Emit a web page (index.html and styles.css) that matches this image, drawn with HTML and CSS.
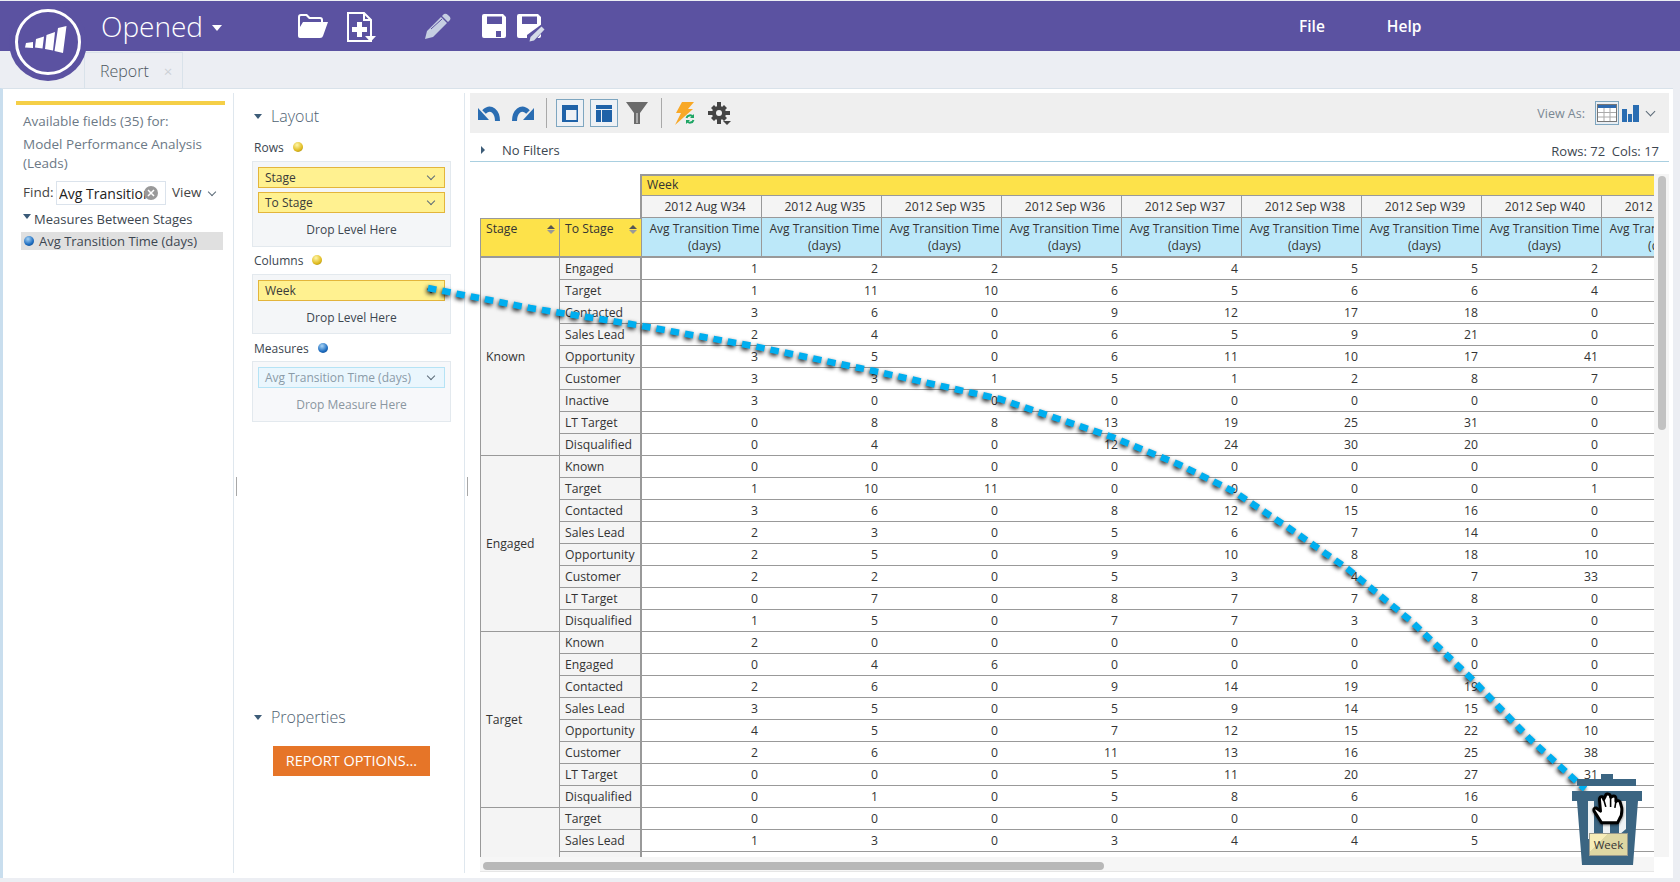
FILE: index.html
```html
<!DOCTYPE html>
<html lang="en">
<head>
<meta charset="utf-8">
<title>Opened - Report</title>
<link rel="stylesheet" href="styles.css">
</head>
<body>
<div class="app">
  <header class="topbar">
    <div class="title">Opened<span class="title-caret"></span></div>
    <div class="top-icons">
      <svg class="ic-folder" width="30" height="24" viewBox="0 0 30 24"><path fill="#fff" d="M0 3Q0 0 3 0H9L12 3H22Q25 3 25 6V8H23V6Q23 5 22 5H11L8 2H3Q2 2 2 3V13L5 8H30L25 22Q24.500 24 22 24H2Q0 24 0 22Z"/></svg>
      <svg class="ic-doc" width="29" height="30" viewBox="0 0 29 30"><path fill="none" stroke="#fff" stroke-width="2" d="M1 1H17L24 8V29H1Z"/><path fill="#fff" d="M16 1H18V7H24V9H16ZM10 10H15V15H20V20H15V25H10V20H5V15H10Z"/><path fill="#fff" d="M18 24H29L23.500 30Z"/></svg>
      <svg class="ic-pencil" width="26" height="26" viewBox="0 0 26 26"><path fill="#c6cfe2" d="M19 1Q21 0 23 2L25 4Q26 6 25 7L23 9L17 3ZM16 4L22 10L8 24L0 26L2 18Z"/><path stroke="#5b52a1" stroke-width="1" d="M6 16L17 6"/></svg>
      <svg class="ic-save" width="24" height="24" viewBox="0 0 24 24"><path fill="#fff" fill-rule="evenodd" d="M2 0H21L24 3V22Q24 24 22 24H2Q0 24 0 22V2Q0 0 2 0ZM5 2.500V10H20V2.500ZM14 17V23H19V17Z"/></svg>
      <svg class="ic-saveas" width="29" height="28" viewBox="0 0 29 28"><path fill="#fff" fill-rule="evenodd" d="M2 0H21L24 3V22Q24 24 22 24H2Q0 24 0 22V2Q0 0 2 0ZM5 2.500V10H20V2.500Z"/><path fill="#5b52a1" d="M25 10L29 14L17 28H10V21Z"/><path fill="#d5dbe8" d="M24.500 12.500L27.500 15.500L17 26.500L12.500 27.500L13.500 23Z"/></svg>
    </div>
    <nav class="top-menu"><span class="menu-file">File</span><span class="menu-help">Help</span></nav>
  </header>

  <div class="tabbar"><div class="tab"><span>Report</span><i class="tab-x">×</i></div></div>

  <main class="content">
    <section class="fields">
      <div class="accent"></div>
      <p class="avail">Available fields (35) for:</p>
      <p class="model">Model Performance Analysis<br>(Leads)</p>
      <div class="find">
        <label>Find:</label>
        <div class="find-input"><span class="find-text">Avg Transition</span><svg class="clear" width="14" height="14" viewBox="0 0 14 14"><circle cx="7" cy="7" r="7" fill="#999"/><path stroke="#fff" stroke-width="1.500" d="M4 4L10 10M10 4L4 10"/></svg></div>
        <span class="view">View</span><span class="chev"></span>
      </div>
      <div class="tree-head"><span class="tri-down"></span>Measures Between Stages</div>
      <div class="tree-item"><span class="ball blue"></span>Avg Transition Time (days)</div>
      <div class="split-handle"></div>
    </section>

    <section class="layout">
      <h2 class="sec-title"><span class="tri-small"></span>Layout</h2>
      <div class="lbl lbl-rows">Rows<span class="ball gold"></span></div>
      <div class="well">
        <div class="pill">Stage<span class="chev"></span></div>
        <div class="pill">To Stage<span class="chev"></span></div>
        <div class="drop">Drop Level Here</div>
      </div>
      <div class="lbl lbl-cols">Columns<span class="ball gold"></span></div>
      <div class="well well-col">
        <div class="pill">Week<span class="chev"></span></div>
        <div class="drop">Drop Level Here</div>
      </div>
      <div class="lbl lbl-meas">Measures<span class="ball blue"></span></div>
      <div class="well well-m">
        <div class="pill pill-m">Avg Transition Time (days)<span class="chev"></span></div>
        <div class="drop drop-m">Drop Measure Here</div>
      </div>
      <h2 class="sec-title props"><span class="tri-small"></span>Properties</h2>
      <button class="report-btn">REPORT OPTIONS...</button>
      <div class="split-handle"></div>
    </section>

    <section class="report">
      <div class="toolbar">
        <svg class="t-undo" width="22" height="16" viewBox="0 0 22 16"><path fill="none" stroke="#2a6db2" stroke-width="5" d="M19.500 16C19.500 7 13 0 6 7"/><path fill="#2a6db2" d="M0 3V15H11Z"/></svg>
        <svg class="t-redo" width="22" height="16" viewBox="0 0 22 16"><path fill="none" stroke="#2a6db2" stroke-width="5" d="M2.500 16C2.500 7 9 0 16 7"/><path fill="#2a6db2" d="M22 3V15H11Z"/></svg>
        <span class="t-sep"></span>
        <span class="t-btn"><svg width="16" height="17" viewBox="0 0 16 17"><path fill="#1f62a8" d="M0 0H16V17H0ZM4 5V15H14.500V5Z"/></svg></span>
        <span class="t-btn"><svg width="16" height="17" viewBox="0 0 16 17"><path fill="#1f62a8" d="M0 0H16V4H0ZM0 5H5V17H0ZM6 5H16V17H6Z"/></svg></span>
        <svg class="t-filter" width="22" height="22" viewBox="0 0 22 22"><path fill="#6b6b6b" d="M0 0H22L14 11V22H8V11Z"/><path fill="#aaa" d="M10 11H12V21H10Z"/></svg>
        <span class="t-sep t-sep2"></span>
        <svg class="t-bolt" width="22" height="23" viewBox="0 0 22 23"><path fill="#f8a826" d="M8 0H20L14 7H19L1 23L7 11H2Z"/><circle cx="16" cy="17" r="5" fill="#efefef"/><path fill="none" stroke="#1da564" stroke-width="2" d="M12.500 16A3.600 3.600 0 0 1 19 15M19.500 18A3.600 3.600 0 0 1 13 19"/><path fill="#1da564" d="M20 12V16H16ZM12 22V18H16Z"/></svg>
        <svg class="t-gear" width="23" height="23" viewBox="0 0 23 23"><g fill="#444"><circle cx="11" cy="11" r="7"/><path d="M9 0H13V5H9ZM9 17H13V22H9ZM0 9H5V13H0ZM17 9H22V13H17Z"/><path d="M3 6L6 3L9 6L6 9ZM13 6L16 3L19 6L16 9ZM3 16L6 13L9 16L6 19ZM13 16L16 13L19 16L16 19Z"/></g><circle cx="11" cy="11" r="3" fill="#efefef"/><path fill="#444" d="M15 19H23L19 23Z"/></svg>
        <span class="view-as">View As:</span>
        <span class="va-btn"><svg width="20" height="18" viewBox="0 0 20 18"><rect x=".5" y=".5" width="19" height="17" fill="#fff" stroke="#777"/><rect x="1" y="1" width="18" height="3" fill="#2f6bb0"/><path stroke="#aaa" fill="none" d="M7 4V17M13 4V17M1 8.500H19M1 13H19"/></svg></span>
        <svg class="va-bars" width="17" height="17" viewBox="0 0 17 17"><path fill="#2a6db2" d="M0 4H5V17H0ZM6 9H10V17H6ZM11 0H17V17H11Z"/></svg>
        <span class="chev chev-va"></span>
      </div>

      <div class="filterbar">
        <span class="tri-right"></span><span class="nofilters">No Filters</span>
        <span class="counts">Rows: 72&nbsp; Cols: 17</span>
      </div>

      <div class="grid-area">
        <div class="grid-view">
          <table class="pivot">
            <colgroup><col class="c1"><col class="c2"><col class="c3"><col class="c3"><col class="c3"><col class="c3"><col class="c3"><col class="c3"><col class="c3"><col class="c3"><col class="c3"></colgroup>
            <thead>
              <tr class="r-week"><th class="blank" colspan="2" rowspan="2"></th><th class="yellow week" colspan="9">Week</th></tr>
              <tr class="r-date"><th class="date first">2012 Aug W34</th><th class="date">2012 Aug W35</th><th class="date">2012 Sep W35</th><th class="date">2012 Sep W36</th><th class="date">2012 Sep W37</th><th class="date">2012 Sep W38</th><th class="date">2012 Sep W39</th><th class="date">2012 Sep W40</th><th class="date">2012 Sep W41</th></tr>
              <tr class="r-head">
                <th class="yellow dim">Stage<span class="sort"></span></th>
                <th class="yellow dim">To Stage<span class="sort"></span></th>
                <th class="meas first">Avg Transition Time (days)</th><th class="meas">Avg Transition Time (days)</th><th class="meas">Avg Transition Time (days)</th><th class="meas">Avg Transition Time (days)</th><th class="meas">Avg Transition Time (days)</th><th class="meas">Avg Transition Time (days)</th><th class="meas">Avg Transition Time (days)</th><th class="meas">Avg Transition Time (days)</th><th class="meas">Avg Transition Time (days)</th>
              </tr>
            </thead>
            <tbody>
              <tr><th class="group" rowspan="9">Known</th><th class="sub">Engaged</th><td class="first">1</td><td>2</td><td>2</td><td>5</td><td>4</td><td>5</td><td>5</td><td>2</td><td></td></tr>
              <tr><th class="sub">Target</th><td class="first">1</td><td>11</td><td>10</td><td>6</td><td>5</td><td>6</td><td>6</td><td>4</td><td></td></tr>
              <tr><th class="sub">Contacted</th><td class="first">3</td><td>6</td><td>0</td><td>9</td><td>12</td><td>17</td><td>18</td><td>0</td><td></td></tr>
              <tr><th class="sub">Sales Lead</th><td class="first">2</td><td>4</td><td>0</td><td>6</td><td>5</td><td>9</td><td>21</td><td>0</td><td></td></tr>
              <tr><th class="sub">Opportunity</th><td class="first">3</td><td>5</td><td>0</td><td>6</td><td>11</td><td>10</td><td>17</td><td>41</td><td></td></tr>
              <tr><th class="sub">Customer</th><td class="first">3</td><td>3</td><td>1</td><td>5</td><td>1</td><td>2</td><td>8</td><td>7</td><td></td></tr>
              <tr><th class="sub">Inactive</th><td class="first">3</td><td>0</td><td>0</td><td>0</td><td>0</td><td>0</td><td>0</td><td>0</td><td></td></tr>
              <tr><th class="sub">LT Target</th><td class="first">0</td><td>8</td><td>8</td><td>13</td><td>19</td><td>25</td><td>31</td><td>0</td><td></td></tr>
              <tr><th class="sub">Disqualified</th><td class="first">0</td><td>4</td><td>0</td><td>12</td><td>24</td><td>30</td><td>20</td><td>0</td><td></td></tr>
              <tr><th class="group" rowspan="8">Engaged</th><th class="sub">Known</th><td class="first">0</td><td>0</td><td>0</td><td>0</td><td>0</td><td>0</td><td>0</td><td>0</td><td></td></tr>
              <tr><th class="sub">Target</th><td class="first">1</td><td>10</td><td>11</td><td>0</td><td>0</td><td>0</td><td>0</td><td>1</td><td></td></tr>
              <tr><th class="sub">Contacted</th><td class="first">3</td><td>6</td><td>0</td><td>8</td><td>12</td><td>15</td><td>16</td><td>0</td><td></td></tr>
              <tr><th class="sub">Sales Lead</th><td class="first">2</td><td>3</td><td>0</td><td>5</td><td>6</td><td>7</td><td>14</td><td>0</td><td></td></tr>
              <tr><th class="sub">Opportunity</th><td class="first">2</td><td>5</td><td>0</td><td>9</td><td>10</td><td>8</td><td>18</td><td>10</td><td></td></tr>
              <tr><th class="sub">Customer</th><td class="first">2</td><td>2</td><td>0</td><td>5</td><td>3</td><td>4</td><td>7</td><td>33</td><td></td></tr>
              <tr><th class="sub">LT Target</th><td class="first">0</td><td>7</td><td>0</td><td>8</td><td>7</td><td>7</td><td>8</td><td>0</td><td></td></tr>
              <tr><th class="sub">Disqualified</th><td class="first">1</td><td>5</td><td>0</td><td>7</td><td>7</td><td>3</td><td>3</td><td>0</td><td></td></tr>
              <tr><th class="group" rowspan="8">Target</th><th class="sub">Known</th><td class="first">2</td><td>0</td><td>0</td><td>0</td><td>0</td><td>0</td><td>0</td><td>0</td><td></td></tr>
              <tr><th class="sub">Engaged</th><td class="first">0</td><td>4</td><td>6</td><td>0</td><td>0</td><td>0</td><td>0</td><td>0</td><td></td></tr>
              <tr><th class="sub">Contacted</th><td class="first">2</td><td>6</td><td>0</td><td>9</td><td>14</td><td>19</td><td>19</td><td>0</td><td></td></tr>
              <tr><th class="sub">Sales Lead</th><td class="first">3</td><td>5</td><td>0</td><td>5</td><td>9</td><td>14</td><td>15</td><td>0</td><td></td></tr>
              <tr><th class="sub">Opportunity</th><td class="first">4</td><td>5</td><td>0</td><td>7</td><td>12</td><td>15</td><td>22</td><td>10</td><td></td></tr>
              <tr><th class="sub">Customer</th><td class="first">2</td><td>6</td><td>0</td><td>11</td><td>13</td><td>16</td><td>25</td><td>38</td><td></td></tr>
              <tr><th class="sub">LT Target</th><td class="first">0</td><td>0</td><td>0</td><td>5</td><td>11</td><td>20</td><td>27</td><td>31</td><td></td></tr>
              <tr><th class="sub">Disqualified</th><td class="first">0</td><td>1</td><td>0</td><td>5</td><td>8</td><td>6</td><td>16</td><td>0</td><td></td></tr>
              <tr><th class="group" rowspan="3"></th><th class="sub">Target</th><td class="first">0</td><td>0</td><td>0</td><td>0</td><td>0</td><td>0</td><td>0</td><td>0</td><td></td></tr>
              <tr><th class="sub">Sales Lead</th><td class="first">1</td><td>3</td><td>0</td><td>3</td><td>4</td><td>4</td><td>5</td><td>0</td><td></td></tr>
              <tr><th class="sub">Contacted</th><td class="first">3</td><td>4</td><td>0</td><td>7</td><td>9</td><td>11</td><td>11</td><td>0</td><td></td></tr>
            </tbody>
          </table>
        </div>
        <div class="vscroll"><div class="vthumb"></div></div>
      </div>
      <div class="hscroll"><div class="hthumb"></div></div>
    </section>
  </main>

  <svg class="logo" width="78" height="78" viewBox="0 0 78 78">
    <circle cx="39" cy="39" r="39" fill="#5b52a1"/>
    <circle cx="39" cy="39" r="31.500" fill="none" stroke="#fff" stroke-width="3"/>
    <path fill="#fff" d="M17 40L24 39L24 45L16 44.500ZM27 36L35 33.500L33.500 45.500L26 44.500ZM37.500 32L46 29L44 47.500L36 46ZM49 25L57.500 23L54 50L45.500 48Z"/>
  </svg>

  <svg class="drag-line" width="1680" height="882" viewBox="0 0 1680 882">
    <polyline class="drag-dash" points="428,287 530,307 637,324 753,345 874,370 1000,398 1115,437 1178,463 1233,490 1289,527 1348,568 1411,620 1472,678 1530,738 1585,788"/>
  </svg>

  <div class="trash">
    <svg width="85" height="100" viewBox="0 0 85 100">
      <path fill="#3b6582" d="M36 5H48V10H71V17H12V10H36ZM7 22H77V32H73L68 96H17L12 32H7Z"/>
      <path fill="#eef2f4" d="M23 32H29V70H23ZM38 55H45V66H38ZM54 32H61V60L54 66Z"/>
    </svg>
    <svg class="hand" width="34" height="34" viewBox="0 0 32 32">
      <path fill="#fff" stroke="#000" stroke-width="2.800" stroke-linejoin="round" d="M9 29L2 18Q1 15 4 15L8 18L7 7Q7 4 9.500 4.500Q11 5 11 7L12.500 4Q13 1.500 15.500 2Q17.500 2.500 17.500 5L19.500 4Q22 3 22.500 6V9Q25 7 26.500 9.500L28 15Q28.500 22 26 25L24 29Z"/>
      <path stroke="#000" stroke-width="1.500" d="M11 7L13 14M17.500 5L17.500 14M22.500 9L21.500 15"/>
    </svg>
    <div class="trash-tag">Week</div>
  </div>
</div>
</body>
</html>
```
FILE: styles.css
```css
* { box-sizing: border-box; }
html, body { margin: 0; padding: 0; height: 100%; overflow: hidden; }
body { background: #eceef3; color: #3c3c3c; font-family: "Open Sans", "Liberation Sans", sans-serif; font-size: 12px; }
.app { position: relative; width: 1680px; height: 882px; }

.topbar { display: flex; align-items: center; margin-top: 1px; height: 50px; background: #5b52a1; color: #fff; position: relative; }
.title { margin-left: 101px; font-size: 28px; font-weight: 300; line-height: 50px; display: flex; align-items: center; width: 197px; }
.title-caret { margin-left: 9px; margin-top: 3px; border: 5.5px solid transparent; border-top: 6px solid #fff; border-bottom: 0; }
.top-icons { display: flex; align-items: center; height: 50px; }
.ic-folder { margin-right: 19px; }
.ic-doc { margin-right: 49px; margin-top: 2px; }
.ic-pencil { margin-right: 31px; }
.ic-save { margin-right: 11px; }
.ic-saveas { margin-top: 4px; }
.top-menu { display: flex; font-size: 15.5px; font-weight: 600; position: absolute; left: 1299px; top: 0; line-height: 50px; margin-top: 0; }
.menu-file { margin-right: 62px; }

.tabbar { height: 37px; background: #eceef3; padding-left: 84px; padding-top: 1px; }
.tab { width: 99px; height: 36px; border: 1px solid #d9e2ea; border-bottom: 0; display: flex; align-items: center; padding-left: 15px; font-size: 16px; font-weight: 300; color: #4d5660; }
.tab-x { font-style: normal; color: #ccd1d6; margin-left: 15px; font-size: 15px; font-weight: 400; }

.content { display: flex; margin-left: 0; width: 1673px; height: 790px; background: #fff; border-top: 1px solid #d9e2ea; border-left: 3px solid #c9deee; }

.fields, .layout { position: relative; width: 231px; height: 780px; margin-top: 4px; border-right: 1.5px solid #dfe7ee; flex: none; }
.split-handle { position: absolute; right: -4px; top: 384px; width: 1px; height: 19px; background: #a8a8a8; }
.accent { height: 4px; background: #f5cf47; margin: 8px 8px 0 13px; }
.avail { margin: 6px 0 0 20px; font-size: 13.5px; line-height: 20px; color: #6c7986; }
.model { margin: 4px 0 0 20px; font-size: 13.5px; line-height: 19px; color: #6c7986; }
.find { display: flex; align-items: center; margin: 8px 0 0 20px; height: 24px; color: #444; font-size: 13.5px; }
.find label { width: 33px; margin-top: -2px; }
.find-input { position: relative; width: 110px; height: 24px; border: 1px solid #dbe3ec; padding: 0 2px; line-height: 24px; color: #222; background: #fff; }
.find-text { display: block; width: 88px; overflow: hidden; white-space: nowrap; font-size: 14px; }
.clear { position: absolute; left: 87px; top: 4px; }
.view { margin-left: 6px; margin-right: 7px; margin-top: -2px; }
.chev { display: inline-block; width: 6px; height: 6px; border-right: 1px solid #5c6b78; border-bottom: 1px solid #5c6b78; transform: rotate(45deg); margin-top: -3px; }
.tree-head { position: relative; margin: 4px 0 0 31px; height: 20px; line-height: 20px; font-size: 13px; color: #3c4650; }
.tri-down { position: absolute; left: -11px; top: 5px; border: 4px solid transparent; border-top: 5px solid #3a5a78; border-bottom: 0; }
.tree-item { display: flex; align-items: center; margin: 3px 10px 0 18px; height: 18px; background: #e0e0e0; font-size: 13px; color: #3c4650; padding-left: 3px; white-space: nowrap; }
.ball { display: inline-block; width: 10px; height: 10px; border-radius: 50%; flex: none; }
.ball.blue { background: radial-gradient(circle at 40% 30%, #a8d4f5, #1c6cc0 60%, #0f3c70); }
.ball.gold { background: radial-gradient(circle at 40% 30%, #fff6a8, #e0bb20 60%, #8a7310); }
.tree-item .ball { margin-right: 5px; }

.sec-title { position: relative; margin: 11px 0 0; font-size: 16px; font-weight: 300; color: #4f6272; padding-left: 37px; line-height: 24px; height: 24px; }
.tri-small { position: absolute; left: 20px; top: 10px; border: 4.5px solid transparent; border-top: 5px solid #3d5c78; border-bottom: 0; }
.lbl { display: flex; align-items: center; margin: 0 0 0 20px; height: 18px; line-height: 18px; font-size: 12px; color: #3c4650; }
.lbl-rows { margin-top: 11px; }
.lbl-cols { margin-top: 5px; }
.lbl-meas { margin-top: 6px; }
.lbl .ball { margin-left: 9px; margin-top: -2px; }
.well { margin: 3px 14px 0 18px; width: 199px; height: 86px; padding: 5px; background: #f4f6f8; border: 1px solid #e3e9ee; }
.lbl-rows + .well { margin-top: 4px; }
.well-col { height: 60px; margin-top: 4px; }
.well-m { height: 61px; background: #f7f8fa; }
.pill { display: flex; justify-content: space-between; align-items: center; height: 21px; margin-bottom: 4px; padding: 0 10px 0 6px; background: #fff190; border: 1px solid #e3b53b; color: #3a3a3a; font-size: 12px; }
.pill-m { background: #eaf6fd; border-color: #b5e3f5; color: #8a9ba8; }
.drop { text-align: center; line-height: 18px; margin-top: 8px; color: #3c4650; }
.drop-m { color: #8a96a0; }
.props { margin-top: 283px; }
.report-btn { display: block; margin: 17px 0 0 39px; width: 157px; height: 30px; border: 0; background: #e67528; color: #fff; font: 400 14.5px/30px "Open Sans", sans-serif; padding: 0; }

.report { width: 1208px; padding-left: 5px; position: relative; }
.toolbar { display: flex; align-items: center; position: relative; width: 1199px; height: 40px; margin-top: 4px; background: #efefef; padding-left: 8px; }
.t-redo { margin-left: 12px; }
.t-sep { width: 1px; height: 30px; background: #a9a9a9; margin: 0 9px 0 12px; }
.t-btn { display: flex; align-items: center; justify-content: center; width: 28px; height: 28px; border: 1px solid #7ea6c0; background: #eef1f5; margin-right: 6px; }
.t-filter { margin-left: 2px; }
.t-sep2 { margin: 0 12px 0 13px; }
.t-gear { margin-left: 12px; }
.view-as { margin-left: auto; color: #7a8894; font-size: 12.5px; margin-right: 10px; }
.va-btn { display: flex; align-items: center; justify-content: center; width: 24px; height: 24px; border: 1px solid #7ea6c0; background: #e9eef3; }
.va-bars { margin-left: 3px; }
.chev-va { margin: -3px 15px 0 8px; width: 7px; height: 7px; }

.filterbar { display: flex; align-items: center; width: 1199px; height: 29px; border-bottom: 1px solid #a9cfe0; padding: 5px 0 0 11px; font-size: 13px; color: #3c4650; }
.tri-right { border: 4px solid transparent; border-left: 4px solid #3d5c78; border-right: 0; }
.nofilters { margin-left: 17px; }
.counts { margin-left: auto; margin-right: 10px; padding-top: 2px; }

.grid-area { display: flex; margin: 12px 0 0 10px; width: 1189px; height: 683px; }
.grid-view { width: 1174px; height: 683px; overflow: hidden; }
.pivot { border-collapse: separate; border-spacing: 0; table-layout: fixed; width: 1242px; font-size: 12.2px; color: #333; }
.c1 { width: 80px; } .c2 { width: 82px; } .c3 { width: 120px; }
.pivot th, .pivot td { padding: 0 5px; font-weight: 400; border-right: 1px solid #999; border-bottom: 1px solid #999; overflow: hidden; white-space: nowrap; height: 22px; }
.pivot .blank { border: 0; background: #fff; border-right: 2px solid #999; }
.week { border-top: 2px solid #999 !important; text-align: left; padding-bottom: 2px !important; }
.yellow { background: #fde24a; }
.date { background: #f4f4f4; text-align: center; padding-left: 12px !important; padding-right: 5px !important; }
.r-head th { height: 40px; border-bottom: 2px solid #999; }
.dim { position: relative; text-align: left; vertical-align: top; padding-top: 1px !important; line-height: 17px; border-top: 1px solid #999; }
.dim:first-child { border-left: 1px solid #999; }
.sort { position: absolute; right: 4px; top: 6px; width: 0; height: 0; border: 4px solid transparent; border-bottom: 4px solid #555; border-top: 0; }
.sort::after { content: ""; position: absolute; left: -4px; top: 5px; border: 4px solid transparent; border-top: 4px solid #999; border-bottom: 0; }
.meas { background: #bce8f9; text-align: center; white-space: normal !important; line-height: 17px; padding: 0 0 0 6px !important; font-size: 12px; }
.first { border-left: 0; }
.group { background: #f4f4f4; text-align: left; border-left: 1px solid #999; }
.sub { background: #f4f4f4; text-align: left; border-right: 2px solid #999 !important; }
.pivot td { text-align: right; background: #fff; line-height: 21px; border-right: 0; padding-right: 4px; }

.vscroll { width: 15px; height: 683px; background: #f5f5f5; padding: 2px 4px; }
.vthumb { width: 8px; height: 254px; border-radius: 4px; background: #c2c2c2; }
.hscroll { width: 1174px; height: 15px; margin-left: 10px; padding: 5px 0 0 3px; background: #f6f6f6; border-bottom: 1px solid #e6e6e6; }
.hthumb { width: 621px; height: 8px; border-radius: 4px; background: #b8b8b8; }

.logo { position: absolute; left: 9px; top: 2px; }
.drag-line { position: absolute; left: 0; top: 0; pointer-events: none; filter: drop-shadow(-1px 2px 2px rgba(0, 0, 0, .85)); }
.drag-dash { fill: none; stroke: #00aeef; stroke-width: 6.5px; stroke-dasharray: 8.5 6; }
.trash { position: absolute; left: 1565px; top: 768px; width: 85px; height: 100px; }
.hand { position: absolute; left: 27px; top: 23px; filter: drop-shadow(0 1px 1px rgba(0, 0, 0, .5)); }
.trash-tag { position: absolute; left: 24px; top: 64px; width: 39px; height: 23px; border: 1px solid #9a9a8c; background: linear-gradient(135deg, #f7edb8 0 30%, #ded7a3 30%); text-align: center; font-size: 11.5px; line-height: 21px; color: #333; }
```
